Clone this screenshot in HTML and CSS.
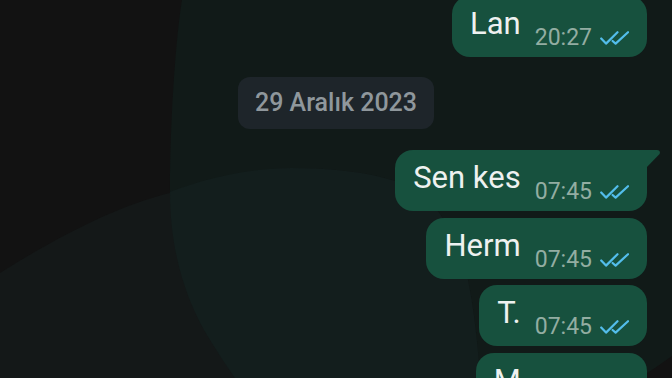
FILE: index.html
```html
<!DOCTYPE html>
<html lang="tr">
<head>
<meta charset="utf-8">
<title>Sohbet</title>
<link rel="stylesheet" href="styles.css">
</head>
<body>
<div class="chat">
  <svg class="wallpaper" viewBox="0 0 672 378" preserveAspectRatio="none" aria-hidden="true">
    <path class="blob-a" d="M182,0 C176,35 170,120 170,190 C170,250 185,300 210,340 C220,356 228,368 235,378 L640,378 C650,371 661,364 672,356 L672,0 Z"/>
    <path class="blob-b" d="M0,273 C60,235 120,205 170,193 C210,180 255,168 291,168 C360,168 410,180 429,200 C450,225 463,250 468,280 C474,310 478,345 480,378 L0,378 Z"/>
    <path class="blob-c" d="M170,192 C190,184 240,168 291,168 C360,168 410,180 429,200 C450,225 463,250 468,280 C474,310 478,345 480,378 L235,378 C228,368 220,356 210,340 C185,300 170,250 170,192 Z"/>
  </svg>

  <div class="messages">
    <div class="bubble">
      <span class="msg">Lan</span>
      <span class="meta"><span class="time">20:27</span><svg class="ticks" viewBox="0 0 29 14"><polyline points="1.2,7.5 6,12.6 17.5,1.2"/><polyline points="12.6,10 15.6,12.6 28,1.2"/></svg></span>
    </div>

    <div class="date">29 Aralık 2023</div>

    <div class="bubble tail">
      <span class="msg">Sen kes</span>
      <span class="meta"><span class="time">07:45</span><svg class="ticks" viewBox="0 0 29 14"><polyline points="1.2,7.5 6,12.6 17.5,1.2"/><polyline points="12.6,10 15.6,12.6 28,1.2"/></svg></span>
    </div>

    <div class="bubble">
      <span class="msg">Herm</span>
      <span class="meta"><span class="time">07:45</span><svg class="ticks" viewBox="0 0 29 14"><polyline points="1.2,7.5 6,12.6 17.5,1.2"/><polyline points="12.6,10 15.6,12.6 28,1.2"/></svg></span>
    </div>

    <div class="bubble">
      <span class="msg">T.</span>
      <span class="meta"><span class="time">07:45</span><svg class="ticks" viewBox="0 0 29 14"><polyline points="1.2,7.5 6,12.6 17.5,1.2"/><polyline points="12.6,10 15.6,12.6 28,1.2"/></svg></span>
    </div>

    <div class="bubble">
      <span class="msg">M</span>
      <span class="meta"><span class="time">07:45</span><svg class="ticks" viewBox="0 0 29 14"><polyline points="1.2,7.5 6,12.6 17.5,1.2"/><polyline points="12.6,10 15.6,12.6 28,1.2"/></svg></span>
    </div>
  </div>
</div>
</body>
</html>
```

FILE: styles.css
```css
html, body {
  margin: 0;
  padding: 0;
  background: #121212;
}

body {
  font-family: Roboto, "Noto Sans", "Liberation Sans", sans-serif;
}

.chat {
  position: relative;
  width: 672px;
  height: 378px;
  overflow: hidden;
  background: #121212;
}

.wallpaper {
  position: absolute;
  left: 0;
  top: 0;
  width: 672px;
  height: 378px;
}

.blob-a { fill: #111a18; }
.blob-b { fill: #141818; }
.blob-c { fill: #131e1d; }

.messages {
  position: relative;
  display: flex;
  flex-direction: column;
  align-items: flex-end;
  margin-top: -4px;
}

.bubble {
  position: relative;
  display: flex;
  align-items: flex-end;
  margin-right: 25px;
  margin-bottom: 6.5px;
  padding: 10px 18px 6px 18px;
  background: #17513e;
  border-radius: 18px;
  color: #eef1f0;
}

.msg {
  font-size: 31px;
  line-height: 36px;
  margin-bottom: 9px;
  margin-right: 14px;
  white-space: nowrap;
}

.meta {
  display: flex;
  align-items: center;
  gap: 8px;
}

.time {
  font-size: 23px;
  line-height: 26px;
  color: #93ada2;
}

.ticks {
  width: 29px;
  height: 14px;
  fill: none;
  stroke: #53bdeb;
  stroke-width: 2.2;
  stroke-linecap: round;
  stroke-linejoin: round;
}

.tail {
  border-top-right-radius: 0;
}

.tail::after {
  content: "";
  position: absolute;
  top: 0;
  right: -14px;
  width: 15px;
  height: 18px;
  background: #17513e;
  clip-path: polygon(0 0, 11px 0, 13px 0.5px, 14px 2px, 13.6px 4px, 0 18px);
}

.date {
  align-self: center;
  margin: 13.5px 0 21px;
  padding: 12px 17px;
  background: #1e252a;
  border-radius: 12px;
  color: #8f979c;
  font-size: 25px;
  font-weight: 500;
  line-height: 28px;
  white-space: nowrap;
}
```
